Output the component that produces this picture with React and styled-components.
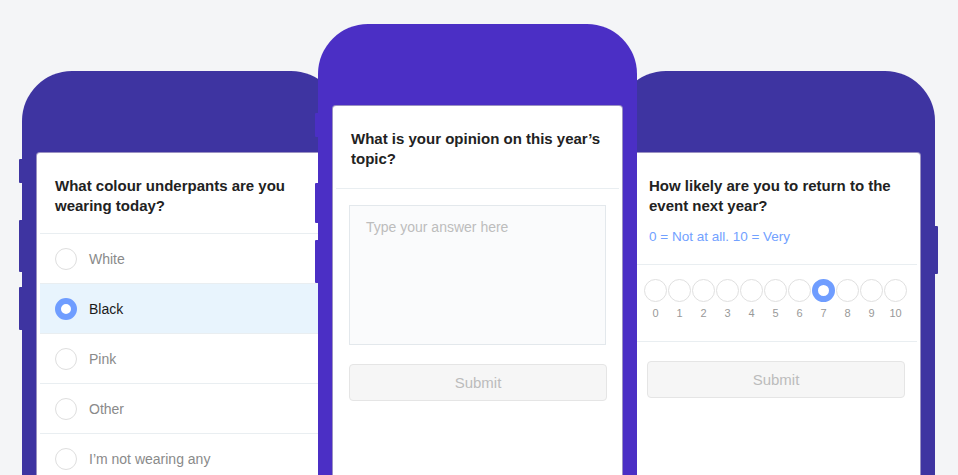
import React from "react";
import styled, { createGlobalStyle } from "styled-components";

const GlobalStyle = createGlobalStyle`
  html, body {
    margin: 0;
    padding: 0;
    background: #f4f5f7;
    overflow: hidden;
  }
  body {
    font-family: "Liberation Sans", Arial, sans-serif;
  }
  * {
    box-sizing: border-box;
  }
`;

const Stage = styled.div`
  display: flex;
  align-items: flex-start;
  height: 475px;
  padding-left: 22px;
  overflow: hidden;
`;

const Phone = styled.div`
  position: relative;
  flex: none;
  width: 319px;
  height: 640px;
  margin-top: ${(p) => p.$top}px;
  margin-left: ${(p) => p.$overlap || 0}px;
  z-index: ${(p) => p.$z || 1};
  padding: 81px 14px 0 14px;
  background: ${(p) => p.$color};
  border-radius: 50px 50px 0 0;
`;

const SideButton = styled.span`
  position: absolute;
  ${(p) => (p.$right ? "right: -3px;" : "left: -3px;")}
  top: ${(p) => p.$top}px;
  width: 4px;
  height: ${(p) => p.$height}px;
  background: ${(p) => p.$color};
  border-radius: 1px;
`;

const Screen = styled.div`
  height: 100%;
  background: #fff;
  border: 1px solid rgba(30, 10, 120, 0.45);
  border-radius: 4px 4px 0 0;
  padding: 0 3px;
`;

const Header = styled.div`
  padding: 23px 15px ${(p) => p.$bottom || 17}px;
  border-bottom: 1px solid #e9eef1;
`;

const Question = styled.h2`
  margin: 0;
  font-size: 15px;
  line-height: 20px;
  font-weight: 700;
  color: #222;
`;

const Hint = styled.p`
  margin: 12px 0 0;
  font-size: 13.5px;
  line-height: 18px;
  color: #72a1ff;
`;

const Option = styled.div`
  display: flex;
  align-items: center;
  gap: 12px;
  height: 50px;
  padding-left: 15px;
  border-bottom: 1px solid #e9eef1;
  background: ${(p) => (p.$selected ? "#e8f4fd" : "#fff")};
  font-size: 14px;
  color: ${(p) => (p.$selected ? "#1a1a1a" : "#8a8a8a")};
`;

const Radio = styled.span`
  flex: none;
  width: 22px;
  height: 22px;
  border-radius: 50%;
  background: #fff;
  border: ${(p) => (p.$on ? "6px solid #6f9dff" : "1.5px solid #dedede")};
`;

const Body = styled.div`
  padding: ${(p) => p.$top || 16}px 12px 0 13px;
`;

const AnswerBox = styled.div`
  height: 140px;
  margin-right: 1px;
  padding: 13px 16px;
  background: #fafbfc;
  border: 1px solid #e3e8ec;
  font-size: 14px;
  color: #bdbdbd;
`;

const Submit = styled.div`
  display: flex;
  align-items: center;
  justify-content: center;
  height: 37px;
  margin-top: ${(p) => p.$gap || 0}px;
  background: #f6f6f6;
  border: 1px solid #e5e5e5;
  border-radius: 4px;
  font-size: 15px;
  color: #bcbcbc;
`;

const Scale = styled.div`
  display: flex;
  justify-content: center;
  padding: 14px 0 21px;
  border-bottom: 1px solid #e9eef1;
`;

const Step = styled.div`
  display: flex;
  flex-direction: column;
  align-items: center;
  gap: 4px;
  width: 24px;
  font-size: 11px;
  line-height: 14px;
  color: #999;
`;

const Dot = styled.span`
  width: 23px;
  height: 23px;
  border-radius: 50%;
  background: #fff;
  border: ${(p) => (p.$on ? "6px solid #6f9dff" : "1.5px solid #e0e0e0")};
`;

const SIDE = "#3e34a1";
const MID = "#4b2fc5";

const options = ["White", "Black", "Pink", "Other", "I’m not wearing any"];

export default function App() {
  return (
    <>
      <GlobalStyle />
      <Stage>
        <Phone $top={71} $color={SIDE} $z={1}>
          <SideButton $top={88} $height={24} $color={SIDE} />
          <SideButton $top={149} $height={52} $color={SIDE} />
          <SideButton $top={216} $height={43} $color={SIDE} />
          <Screen>
            <Header>
              <Question>
                What colour underpants are you
                <br />
                wearing today?
              </Question>
            </Header>
            {options.map((o) => (
              <Option key={o} $selected={o === "Black"}>
                <Radio $on={o === "Black"} />
                {o}
              </Option>
            ))}
          </Screen>
        </Phone>

        <Phone $top={24} $overlap={-23} $color={MID} $z={3}>
          <SideButton $top={89} $height={24} $color={MID} />
          <SideButton $top={159} $height={40} $color={MID} />
          <SideButton $top={216} $height={43} $color={MID} />
          <Screen>
            <Header $bottom={19}>
              <Question>
                What is your opinion on this year’s
                <br />
                topic?
              </Question>
            </Header>
            <Body $top={16}>
              <AnswerBox>Type your answer here</AnswerBox>
              <Submit $gap={19}>Submit</Submit>
            </Body>
          </Screen>
        </Phone>

        <Phone $top={71} $overlap={-21} $color={SIDE} $z={2}>
          <SideButton $right $top={155} $height={48} $color={SIDE} />
          <Screen>
            <Header $bottom={18}>
              <Question>
                How likely are you to return to the
                <br />
                event next year?
              </Question>
              <Hint>0 = Not at all. 10 = Very</Hint>
            </Header>
            <Scale>
              {Array.from({ length: 11 }, (_, i) => (
                <Step key={i}>
                  <Dot $on={i === 7} />
                  {i}
                </Step>
              ))}
            </Scale>
            <Body $top={19}>
              <Submit>Submit</Submit>
            </Body>
          </Screen>
        </Phone>
      </Stage>
    </>
  );
}
